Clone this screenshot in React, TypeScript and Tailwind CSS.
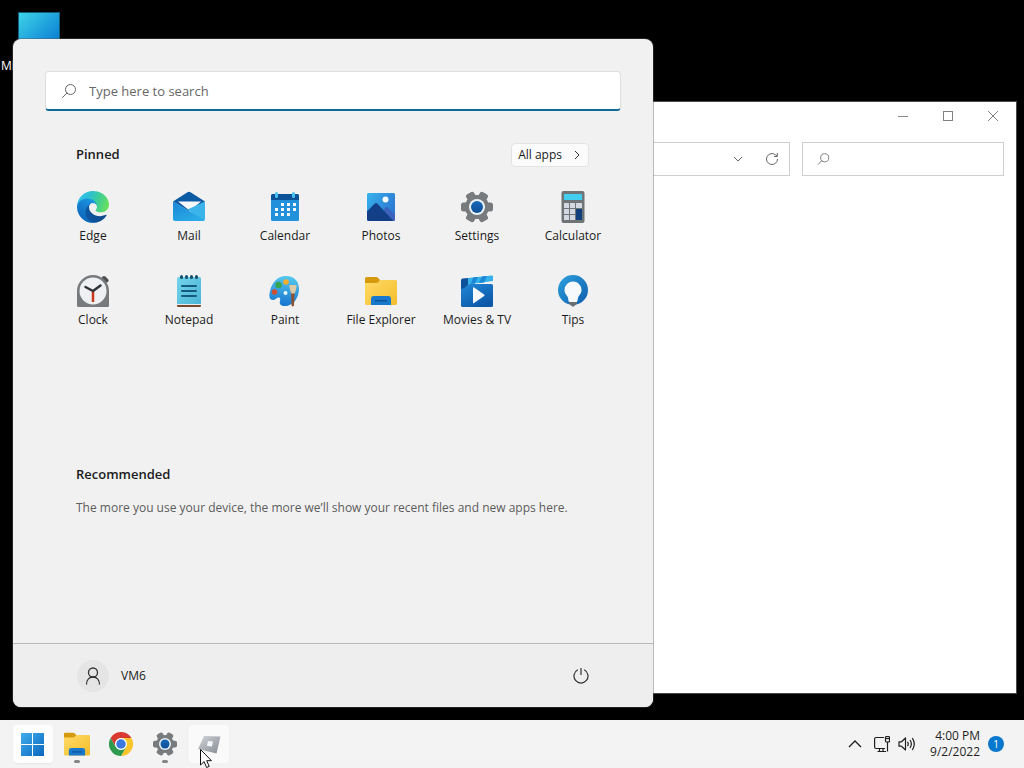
import { useState } from 'react';
import type { ReactNode } from 'react';

function EdgeIcon() {
    return (
        <svg className="size-8" viewBox="0 0 256 256" aria-hidden="true">
            <defs>
                <linearGradient id="edge-deep" x1="0" y1="0.5" x2="1" y2="0.6">
                    <stop offset="0" stopColor="#0c59a4" />
                    <stop offset="1" stopColor="#114a8b" />
                </linearGradient>
                <linearGradient id="edge-mid" x1="0.7" y1="0" x2="0.3" y2="1">
                    <stop offset="0" stopColor="#1b9de2" />
                    <stop offset="0.4" stopColor="#1680d2" />
                    <stop offset="1" stopColor="#0a64b5" />
                </linearGradient>
                <linearGradient id="edge-top" x1="0" y1="0.4" x2="1" y2="0.6">
                    <stop offset="0" stopColor="#35c1f1" />
                    <stop offset="0.35" stopColor="#2cc0cf" />
                    <stop offset="0.7" stopColor="#44d08c" />
                    <stop offset="1" stopColor="#6be05a" />
                </linearGradient>
            </defs>
            <path fill="url(#edge-deep)" d="M231.05 190.54c-3.38 1.77-6.93 3.2-10.6 4.3a101.2 101.2 0 0 1-35.87 6.46c-47.28 0-88.46-32.52-88.46-74.25.13-11.4 6.4-21.86 16.4-27.36-42.76 1.8-53.75 46.36-53.75 72.47 0 73.81 68.03 81.3 82.69 81.3 7.9 0 19.82-2.3 26.97-4.56l1.3-.44a128.34 128.34 0 0 0 66.61-52.8 4 4 0 0 0-5.29-5.12z" />
            <path fill="url(#edge-mid)" d="M105.73 241.42a79.2 79.2 0 0 1-22.74-21.34 80.72 80.72 0 0 1 29.53-120.4c3.12-1.47 8.45-4.13 15.54-4a32.35 32.35 0 0 1 25.69 13 31.88 31.88 0 0 1 6.36 18.66c0-.21 24.46-79.6-80-79.6-43.9 0-80 41.66-80 78.21a130.13 130.13 0 0 0 12.11 56 128 128 0 0 0 156.38 67.11 75.55 75.55 0 0 1-62.78-8z" />
            <path fill="url(#edge-top)" d="M152.33 148.86c-.81 1.05-3.3 2.5-3.3 5.66 0 2.61 1.7 5.12 4.72 7.23 14.38 10 41.49 8.68 41.56 8.68a59.56 59.56 0 0 0 30.27-8.35A61.38 61.38 0 0 0 256 109.2c.27-22.41-8-37.31-11.34-43.91C223.46 23.84 177.72 0 128 0A128 128 0 0 0 0 126.2c.48-36.54 36.8-66.05 80-66.05 3.5 0 23.46.34 42 10.07 16.34 8.58 24.9 18.94 30.85 29.21 6.18 10.67 7.28 24.15 7.28 29.52s-2.74 13.33-7.8 19.91z" />
        </svg>
    );
}

function MailIcon() {
    return (
        <svg className="size-8" viewBox="0 0 32 32" aria-hidden="true">
            <defs>
                <linearGradient id="mail-body" x1="0" y1="0" x2="0.6" y2="1">
                    <stop offset="0" stopColor="#1a86d6" />
                    <stop offset="1" stopColor="#29abe6" />
                </linearGradient>
            </defs>
            <path fill="#0c59a4" d="M0 10.500 14.500 1.200q1.500-.9 3 0L32 10.500 16 20z" />
            <path fill="#f6f9fc" d="M5 10.500h23L17 20z" />
            <path fill="#3cb4e9" d="M14.500 18.500 32 10.500V28q0 2-2 2z" />
            <path fill="url(#mail-body)" d="M0 10.500 31.500 29q-.5 1-1.500 1H2q-2 0-2-2z" />
        </svg>
    );
}

function CalendarIcon() {
    const dots = [[14, 13], [20, 13], [26, 13], [8, 18], [14, 18], [20, 18], [26, 18], [8, 23], [14, 23], [20, 23]];
    return (
        <svg className="size-8" viewBox="0 0 32 32" aria-hidden="true">
            <path fill="#2390dc" d="M2 7h28v21.500a1.500 1.500 0 0 1-1.500 1.500h-25A1.500 1.500 0 0 1 2 28.500z" />
            <path fill="#0c5299" d="M2 4.500A1.500 1.500 0 0 1 3.500 3h25A1.500 1.500 0 0 1 30 4.500V9H2z" />
            <rect x="6" y="1" width="3" height="6" rx="1.500" fill="#4cc2f1" />
            <rect x="23" y="1" width="3" height="6" rx="1.500" fill="#4cc2f1" />
            {dots.map(([x, y]) => (
                <rect key={`${x}-${y}`} x={x - 2} y={y - 1} width="3" height="3" fill="#f3faff" />
            ))}
        </svg>
    );
}

function PhotosIcon() {
    return (
        <svg className="size-8" viewBox="0 0 32 32" aria-hidden="true">
            <defs>
                <linearGradient id="photos-sky" x1="0" y1="0" x2="1" y2="0.6">
                    <stop offset="0" stopColor="#36b3ec" />
                    <stop offset="1" stopColor="#2c77d1" />
                </linearGradient>
            </defs>
            <rect x="2" y="2" width="28" height="28" rx="1.500" fill="url(#photos-sky)" />
            <path fill="#3c62bd" d="m14 26 6.500-9.500q1-1 2 0L30 24v4q0 2-2 2H16z" />
            <path fill="#123f87" d="M2 20.500 9.800 12.500q1.200-1 2.400 0L28.500 30H4q-2 0-2-2z" />
            <circle cx="20.500" cy="8.500" r="3" fill="#f4faff" />
        </svg>
    );
}

function SettingsIcon({ className = 'size-8' }: { className?: string }) {
    return (
        <svg className={className} viewBox="0 0 32 32" aria-hidden="true">
            <defs>
                <linearGradient id="gear-hub" x1="0" y1="0" x2="0" y2="1">
                    <stop offset="0" stopColor="#1668b8" />
                    <stop offset="1" stopColor="#0f4f96" />
                </linearGradient>
            </defs>
            <g fill="#777b7e">
                <circle cx="16" cy="16" r="12" />
                <rect x="0" y="11.500" width="32" height="9" rx="2.500" />
                <rect x="0" y="11.500" width="32" height="9" rx="2.500" transform="rotate(60 16 16)" />
                <rect x="0" y="11.500" width="32" height="9" rx="2.500" transform="rotate(120 16 16)" />
            </g>
            <circle cx="16" cy="16" r="8" fill="#eaf2f9" />
            <circle cx="16" cy="16" r="6" fill="url(#gear-hub)" />
        </svg>
    );
}

function CalculatorIcon() {
    return (
        <svg className="size-8" viewBox="0 0 32 32" aria-hidden="true">
            <rect x="4.500" y="0" width="23" height="32" rx="2" fill="#6f7477" />
            <rect x="7" y="3" width="18" height="6" rx="0.500" fill="#43cdee" />
            {[12, 18, 24].map((y) => (
                <g key={y} fill="#d3d8e2">
                    <rect x="7" y={y} width="5" height="5" rx="0.500" />
                    <rect x="13" y={y} width="5" height="5" rx="0.500" />
                    {y === 12 && <rect x="19" y={y} width="6" height="5" rx="0.500" />}
                </g>
            ))}
            <rect x="19" y="18" width="6" height="11" rx="0.500" fill="#113f7c" />
        </svg>
    );
}

function ClockIcon() {
    return (
        <svg className="size-8" viewBox="0 0 32 32" aria-hidden="true">
            <path stroke="#4e5254" strokeWidth="4" strokeLinecap="round" d="m27 3 2.500 2.500" />
            <path fill="#777b7d" d="M0 16a16 16 0 0 1 32 0v14.500a1.500 1.500 0 0 1-1.500 1.500h-29A1.500 1.500 0 0 1 0 30.500z" />
            <circle cx="16" cy="16" r="13.500" fill="#eef0f4" />
            <path stroke="#c8391b" strokeWidth="2.500" d="M16 16v11" />
            <path fill="none" stroke="#2d3338" strokeWidth="2.500" strokeLinecap="round" strokeLinejoin="round" d="m8.500 12 7.500 4 7.500-5.500" />
        </svg>
    );
}

function NotepadIcon() {
    return (
        <svg className="size-8" viewBox="0 0 32 32" aria-hidden="true">
            <defs>
                <linearGradient id="notepad-page" x1="0" y1="0" x2="1" y2="1">
                    <stop offset="0" stopColor="#74d5ea" />
                    <stop offset="1" stopColor="#4bb4d6" />
                </linearGradient>
            </defs>
            <path fill="#79452a" d="M4 27h24v3.500q0 1.500-1.500 1.500h-21Q4 32 4 30.500z" />
            <path fill="#e8edf0" d="M4 26h24v4H4z" />
            <path fill="url(#notepad-page)" d="M4 3.500Q4 2 5.500 2h21Q28 2 28 3.500V29H4z" />
            <path stroke="#155b7e" strokeWidth="2" strokeLinecap="round" d="M9 11h14M9 16h14M9 21h14" />
            <g fill="#16516f">
                <rect x="7" y="0" width="3" height="4" rx="1.500" />
                <rect x="12" y="0" width="3" height="4" rx="1.500" />
                <rect x="17" y="0" width="3" height="4" rx="1.500" />
                <rect x="22" y="0" width="3" height="4" rx="1.500" />
            </g>
        </svg>
    );
}

function PaintIcon() {
    return (
        <svg className="size-8" viewBox="0 0 32 32" aria-hidden="true">
            <defs>
                <linearGradient id="palette" x1="0.6" y1="0" x2="0.5" y2="1">
                    <stop offset="0" stopColor="#56c9ee" />
                    <stop offset="1" stopColor="#1673cf" />
                </linearGradient>
            </defs>
            <path fill="url(#palette)" d="M17 1C26 1 30 7 30 14c0 9-6 17-14 17-4 0-6-2-5-5 .7-2.500 0-4-2-3.500-1.500.4-3 2.500-5 2.500-3 0-4-3-3.500-6C2 8 8 1 17 1z" />
            <circle cx="9.500" cy="10" r="3.200" fill="#35a552" />
            <circle cx="17" cy="7" r="2.800" fill="#f2ae2e" />
            <circle cx="5.500" cy="17" r="2.800" fill="#d04f32" />
            <circle cx="16.500" cy="18" r="2" fill="#e8f6fd" />
            <path fill="#8a5433" d="M22 17h3.500l-.5 13.500q-1.200 2-2.500 0z" />
            <path fill="#dcc9a6" d="M20.500 10h7v2q-.5 4-2 6.500h-3q-1.500-2.500-2-6.500z" />
        </svg>
    );
}

function FolderIcon({ className = 'size-8' }: { className?: string }) {
    return (
        <svg className={className} viewBox="0 0 32 32" aria-hidden="true">
            <defs>
                <linearGradient id="folder-front" x1="0" y1="0" x2="1" y2="1">
                    <stop offset="0" stopColor="#ffdb66" />
                    <stop offset="1" stopColor="#f3bd2c" />
                </linearGradient>
            </defs>
            <path fill="#d69a0f" d="M0 3.500Q0 2 1.500 2h9.800q1 0 1.700.8L15 5v6H0z" />
            <path fill="url(#folder-front)" d="M0 8h11.500q1 0 1.700-.8l1-1.200q.7-1 1.800-1h14.500Q32 5 32 6.500v22q0 1.500-1.500 1.500h-29Q0 30 0 28.500z" />
            <path fill="#1878cb" d="M6 30v-6q0-3 3-3h14q3 0 3 3v6z" />
            <path fill="#0e5299" d="M10 25h12v1.500H10z" />
        </svg>
    );
}

function MoviesIcon() {
    return (
        <svg className="size-8" viewBox="0 0 32 32" aria-hidden="true">
            <defs>
                <linearGradient id="movie-body" x1="0" y1="0" x2="0.6" y2="1">
                    <stop offset="0" stopColor="#2188d8" />
                    <stop offset="1" stopColor="#0d58a8" />
                </linearGradient>
            </defs>
            <path fill="#0e519b" d="M0 5.500Q0 3.800 1.700 3.600L7 3v8l-7 5z" />
            <path fill="#35b1ea" d="m7 3 23.500-2.500Q32 .3 32 1.800V6L7 9.500z" />
            <path fill="#1c87d6" d="m12 2.500 5-.6-3 6.600-4 .5zM21 1.500l5-.5-3 6.400-5 .6z" />
            <path fill="url(#movie-body)" d="M0 14Q4 13.500 5.500 11 7 9 9 9h21.500Q32 9 32 10.500v20q0 1.500-1.500 1.500h-29Q0 32 0 30.500z" />
            <path fill="#f5f9fd" d="M12 13v14.500q0 1.200 1.100.6l10-7q1-.8 0-1.600l-10-7.100q-1.100-.6-1.100.6z" />
        </svg>
    );
}

function TipsIcon() {
    return (
        <svg className="size-8" viewBox="0 0 32 32" aria-hidden="true">
            <defs>
                <linearGradient id="tips-disc" x1="0" y1="0" x2="1" y2="1">
                    <stop offset="0" stopColor="#2ba2df" />
                    <stop offset="1" stopColor="#0e5cab" />
                </linearGradient>
            </defs>
            <circle cx="16" cy="15" r="15" fill="url(#tips-disc)" />
            <path fill="#f7fafc" d="M16 6.500A8.500 8.500 0 0 1 24.500 15c0 4-3 5.500-3.500 8-.3 1.800-.5 4-1.500 4h-7c-1 0-1.200-2.200-1.500-4-.5-2.500-3.500-4-3.500-8A8.500 8.500 0 0 1 16 6.500z" />
            <path fill="#6b6f72" d="M12 27h8v1.500L17.500 31q-1.500 1-3 0L12 28.500z" />
        </svg>
    );
}

function ChromeIcon() {
    const blade = 'M3.200 12A24 24 0 0 1 44.800 12H24A12 12 0 0 0 13.600 30z';
    return (
        <svg className="size-6" viewBox="0 0 48 48" aria-hidden="true">
            <circle cx="24" cy="24" r="13" fill="#fff" />
            <path fill="#d93a2f" d={blade} />
            <path fill="#f9c52b" d={blade} transform="rotate(120 24 24)" />
            <path fill="#2f9a4e" d={blade} transform="rotate(240 24 24)" />
            <circle cx="24" cy="24" r="9.500" fill="#3b79e0" />
        </svg>
    );
}

function WindowsIcon() {
    return (
        <svg className="size-6" viewBox="0 0 24 24" aria-hidden="true">
            <defs>
                <linearGradient id="start-tiles" gradientUnits="userSpaceOnUse" x1="0" y1="0" x2="24" y2="24">
                    <stop offset="0" stopColor="#43b0ee" />
                    <stop offset="1" stopColor="#0864bd" />
                </linearGradient>
            </defs>
            <path fill="url(#start-tiles)" d="M0 1h11v11H0zM12 1h11v11H12zM0 13h11v11H0zM12 13h11v11H12z" />
        </svg>
    );
}

function RobloxIcon() {
    return (
        <svg className="size-6" viewBox="0 0 24 24" aria-hidden="true">
            <defs>
                <linearGradient id="slab" x1="0" y1="0" x2="1" y2="1">
                    <stop offset="0" stopColor="#d3d6da" />
                    <stop offset="1" stopColor="#858a91" />
                </linearGradient>
            </defs>
            <path fill="url(#slab)" d="m7 4 16.500.5-4 17L1 17z" />
            <path fill="#f4f7fa" d="m11 9 5 .5-1.200 5-5-.8z" />
        </svg>
    );
}

function SearchGlyph({ className }: { className?: string }) {
    return (
        <svg className={className} viewBox="0 0 16 16" fill="none" stroke="currentColor" aria-hidden="true">
            <circle cx="9.500" cy="6.500" r="5" />
            <path strokeLinecap="round" d="M6 10 1.500 14.500" />
        </svg>
    );
}

const pinned: { name: string; icon: ReactNode }[] = [
    { name: 'Edge', icon: <EdgeIcon /> },
    { name: 'Mail', icon: <MailIcon /> },
    { name: 'Calendar', icon: <CalendarIcon /> },
    { name: 'Photos', icon: <PhotosIcon /> },
    { name: 'Settings', icon: <SettingsIcon /> },
    { name: 'Calculator', icon: <CalculatorIcon /> },
    { name: 'Clock', icon: <ClockIcon /> },
    { name: 'Notepad', icon: <NotepadIcon /> },
    { name: 'Paint', icon: <PaintIcon /> },
    { name: 'File Explorer', icon: <FolderIcon /> },
    { name: 'Movies & TV', icon: <MoviesIcon /> },
    { name: 'Tips', icon: <TipsIcon /> },
];

function ExplorerWindow() {
    return (
        <section aria-label="Window" className="absolute top-[101px] right-[7px] bottom-[26px] left-12 border border-[#4a4a4a] bg-white text-[#666]">
            <div className="flex h-7 justify-end pr-px">
                <button aria-label="Minimize" className="flex w-[45px] items-center justify-center">
                    <svg className="size-3" viewBox="0 0 12 12" stroke="#8a8a8a" aria-hidden="true"><path d="M1 6.500h10" /></svg>
                </button>
                <button aria-label="Maximize" className="flex w-[45px] items-center justify-center">
                    <svg className="size-3" viewBox="0 0 12 12" fill="none" stroke="#808080" aria-hidden="true"><rect x="1.500" y="1.500" width="9" height="9" /></svg>
                </button>
                <button aria-label="Close" className="flex w-[45px] items-center justify-center">
                    <svg className="size-3" viewBox="0 0 12 12" stroke="#808080" aria-hidden="true"><path d="m1 1 10 10M11 1 1 11" /></svg>
                </button>
            </div>
            <div className="mt-3 flex h-[34px] gap-3 pr-3">
                <div className="flex flex-1 items-center justify-end border border-[#cfcfcf] pr-[3px]">
                    <button aria-label="Previous locations" className="flex w-8 justify-center">
                        <svg className="size-3" viewBox="0 0 12 12" fill="none" stroke="currentColor" aria-hidden="true"><path d="m2 4 4 4 4-4" /></svg>
                    </button>
                    <button aria-label="Refresh" className="flex w-8 justify-center pl-1">
                        <svg className="size-3.5" viewBox="0 0 14 14" fill="none" stroke="currentColor" aria-hidden="true"><path d="M12.500 7A5.500 5.500 0 1 1 10.500 2.800L12 4.200M12.300 1v3.500H9" /></svg>
                    </button>
                </div>
                <label className="flex w-[202px] items-center border border-[#cfcfcf] pl-3.5">
                    <SearchGlyph className="size-3.5" />
                    <input type="text" aria-label="Search folder" className="w-full min-w-0 px-2 text-xs outline-none" />
                </label>
            </div>
        </section>
    );
}

function StartMenu() {
    const [query, setQuery] = useState('');

    return (
        <section aria-label="Start" className="absolute top-[39px] bottom-[13px] left-[13px] flex w-[640px] flex-col overflow-hidden rounded-lg bg-[#f1f1f1] shadow-[0_0_0_1px_#55555566]">
            <div className="flex-1 px-8 pt-8">
                <label className="flex h-10 items-center gap-3 rounded border border-b-2 border-[#dedede] border-b-[#0f6a96] bg-white pl-[15px]">
                    <SearchGlyph className="size-4 shrink-0 text-[#666]" />
                    <input
                        type="text"
                        aria-label="Search"
                        placeholder="Type here to search"
                        value={query}
                        onChange={(e) => setQuery(e.target.value)}
                        className="min-w-0 flex-1 pt-0.5 text-[13px] outline-none placeholder:text-[#686868]"
                    />
                </label>

                <div className="mt-8 flex h-6 items-center justify-between pr-8 pl-[31px]">
                    <h2 className="text-[13px] font-semibold">Pinned</h2>
                    <button className="flex h-6 items-center gap-2.5 rounded border border-[#e3e3e3] bg-[#fbfbfb] px-1.5 text-xs">
                        All apps
                        <svg className="size-2.5" viewBox="0 0 10 10" fill="none" stroke="#333" aria-hidden="true"><path d="m3 1 4 4-4 4" /></svg>
                    </button>
                </div>

                <div className="mt-3.5 grid grid-cols-6">
                    {pinned.map((app) => (
                        <button key={app.name} className="flex h-[84px] flex-col items-center gap-[3px] pt-2.5 text-xs">
                            {app.icon}
                            <span className="leading-5">{app.name}</span>
                        </button>
                    ))}
                </div>

                <div className="mt-[115px] px-[31px]">
                    <h2 className="text-[13px] leading-5 font-semibold">Recommended</h2>
                    <p className="mt-3.5 text-xs leading-5 text-[#5c5c5c]">The more you use your device, the more we’ll show your recent files and new apps here.</p>
                </div>
            </div>

            <div className="flex h-16 items-center justify-between border-t border-[#b9b9b9] bg-[#eeeeee] px-16">
                <button className="flex items-center gap-3 text-xs">
                    <span className="flex size-8 items-center justify-center rounded-full bg-[#e5e5e5]">
                        <svg className="size-[18px]" viewBox="0 0 18 18" fill="none" stroke="#333" strokeWidth="1.300" aria-hidden="true">
                            <circle cx="9" cy="5.500" r="4.500" />
                            <path d="M2.500 17.500C2.500 13 5 10 9 10s6.500 3 6.500 7.500" />
                        </svg>
                    </span>
                    VM6
                </button>
                <button aria-label="Power">
                    <svg className="size-4" viewBox="0 0 16 16" fill="none" stroke="#333" strokeWidth="1.200" aria-hidden="true">
                        <path d="M8 0v7M4.800 1.800a7 7 0 1 0 6.400 0" />
                    </svg>
                </button>
            </div>
        </section>
    );
}

function TaskButton({ label, highlight = '', running, children }: { label: string; highlight?: string; running?: boolean; children: ReactNode }) {
    return (
        <button aria-label={label} className={`relative flex h-[38px] w-10 items-center justify-center rounded ${highlight}`}>
            {children}
            {running && <span className="absolute bottom-0 h-[3px] w-1.5 rounded-full bg-[#858585]" />}
        </button>
    );
}

function Taskbar() {
    return (
        <footer className="flex h-12 items-center justify-between bg-[#f3f3f3] pr-5 pl-[13px]">
            <nav className="flex gap-1">
                <TaskButton label="Start" highlight="bg-white/85 shadow-xs"><WindowsIcon /></TaskButton>
                <TaskButton label="File Explorer" running><FolderIcon className="size-[26px]" /></TaskButton>
                <TaskButton label="Chrome"><ChromeIcon /></TaskButton>
                <TaskButton label="Settings" running><SettingsIcon className="size-6" /></TaskButton>
                <TaskButton label="Roblox" highlight="bg-white/60"><RobloxIcon /></TaskButton>
            </nav>
            <div className="flex items-center text-[#1f1f1f]">
                <button aria-label="Show hidden icons" className="mr-3">
                    <svg className="size-3.5" viewBox="0 0 14 14" fill="none" stroke="currentColor" strokeWidth="1.300" aria-hidden="true"><path d="m1 10 6-6 6 6" /></svg>
                </button>
                <button aria-label="Network and volume" className="mr-3.5 flex gap-2">
                    <svg className="h-[18px] w-4" viewBox="0 0 16 18" fill="none" stroke="currentColor" strokeWidth="1.200" aria-hidden="true">
                        <path d="M10 2.500H2Q.6 2.500.6 4v8Q.6 13.500 2 13.500h9M3.500 16.500h8.500M5.500 13.500v3M9 13.500v3M13.500 7v9.500" />
                        <rect x="11.500" y="1.500" width="4" height="5.500" rx="1" />
                        <path d="M11.500 3.500h4" />
                    </svg>
                    <svg className="h-[18px] w-[18px]" viewBox="0 0 18 18" fill="none" stroke="currentColor" strokeWidth="1.200" strokeLinejoin="round" aria-hidden="true">
                        <path d="M1 6.800h2.500L7.500 3v12l-4-3.800H1zM9.500 6.800q1.500 2.200 0 4.400M12 5q2.700 4 0 8M14.300 3.200q4 5.800 0 11.600" />
                    </svg>
                </button>
                <button className="text-right text-xs leading-4">
                    <time dateTime="2022-09-02T16:00" className="block">4:00 PM<br />9/2/2022</time>
                </button>
                <button aria-label="Notifications" className="ml-2 flex size-4 items-center justify-center rounded-full bg-[#0878cf] text-[10px] text-white">1</button>
            </div>
        </footer>
    );
}

export default function App() {
    return (
        <div className="relative flex h-screen flex-col overflow-hidden bg-black font-['Open_Sans','Noto_Sans',sans-serif] text-[#1b1b1b]">
            <main className="relative flex-1">
                {/* desktop shortcut, mostly covered by the start menu */}
                <div className="absolute top-3 left-0 w-24 text-xs text-white">
                    <div className="ml-[18px] h-10 w-[42px] border border-[#0f5f7d] bg-linear-to-br from-[#3fd3e6] to-[#0a6fd0]" />
                    <span className="block pt-1.5 pl-px">Microsoft Edge</span>
                </div>
                <ExplorerWindow />
                <StartMenu />
            </main>
            <Taskbar />
            <svg className="absolute top-[748px] left-[199px] h-[22px] w-3.5" viewBox="0 0 14 22" aria-hidden="true">
                <path fill="#fff" stroke="#111" strokeLinejoin="round" d="M1.500 1.500v15.500l3.600-3.400 2.500 5.900 2.600-1.100-2.500-5.700h4.800z" />
            </svg>
        </div>
    );
}
